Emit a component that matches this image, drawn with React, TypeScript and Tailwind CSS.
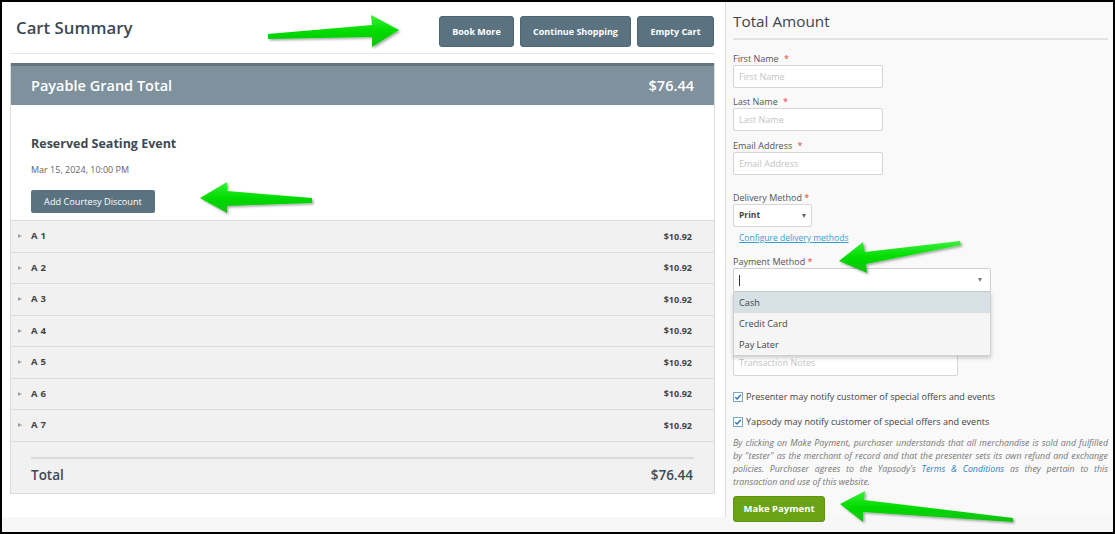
import React from "react";

const font = { fontFamily: "'Open Sans', 'Noto Sans', sans-serif" };

function Arrow({ points }: { points: string }) {
  return <polygon points={points} fill="url(#g)" />;
}

function Row({ label }: { label: string }) {
  return (
    <div className="h-[31.5px] border-t border-[#dcdcdc] bg-[#f1f1f1] flex items-center pl-[7px] pr-[22px]">
      <span className="w-0 h-0 border-y-[2.5px] border-y-transparent border-l-[4px] border-l-[#a0a0a0] mr-[9px]" />
      <span className="text-[9.5px] font-bold text-[#444] tracking-[0.3px]">{label}</span>
      <span className="ml-auto text-[9px] font-bold text-[#444]">$10.92</span>
    </div>
  );
}

function Label({ children }: { children: React.ReactNode }) {
  return (
    <div className="text-[9px] leading-[12px] text-[#555]">
      {children} <span className="text-[#e0403a] ml-[3px]">*</span>
    </div>
  );
}

function Input({ ph, w = "w-[150px]" }: { ph: string; w?: string }) {
  return (
    <div className={`${w} h-[23px] bg-white border border-[#d6d6d6] rounded-[2px] flex items-center pl-[5px] text-[9px] text-[#c4c4c4]`}>
      {ph}
    </div>
  );
}

function Check({ text }: { text: string }) {
  return (
    <div className="flex items-center h-[14px]">
      <span className="w-[10px] h-[10px] border border-[#7aa6cc] bg-white flex items-center justify-center mr-[3px]">
        <svg width="8" height="8" viewBox="0 0 8 8">
          <path d="M1.2 4.2 L3.1 6 L6.8 1.8" stroke="#2a6db5" strokeWidth="1.3" fill="none" />
        </svg>
      </span>
      <span className="text-[9.1px] text-[#444]">{text}</span>
    </div>
  );
}

const buttons: [string, string][] = [
  ["Book More", "w-[75px]"],
  ["Continue Shopping", "w-[111px]"],
  ["Empty Cart", "w-[77px]"],
];

export default function App() {
  return (
    <div style={font} className="relative w-[1115px] h-[534px] border-2 border-black bg-[#f7f7f7] flex overflow-hidden box-border">
      {/* Left column */}
      <div className="w-[723px] h-[515px] bg-white pl-[8px] pr-[10px] shrink-0">
        <div className="h-[52px] border-b border-[#e6e6e6] flex justify-between items-start">
          <div className="mt-[14px] pl-[6px] text-[16.8px] leading-[24px] font-semibold text-[#3d4954]">Cart Summary</div>
          <div className="mt-[14px] flex gap-[6px] pr-[1px]">
            {buttons.map(([b, w]) => (
              <div key={b} className={`${w} h-[31px] bg-[#5b7380] border border-[#4e6571] rounded-[3px] text-white text-[9px] font-bold flex items-center justify-center`}>
                {b}
              </div>
            ))}
          </div>
        </div>
        <div className="mt-[9px] border border-[#dcdcdc] border-t-0">
          <div className="h-[42px] bg-[#7f919c] border-t-[3px] border-[#64777f] flex items-center pl-[20px] pr-[20px] text-white text-[14.5px] font-semibold">
            <span>Payable Grand Total</span>
            <span className="ml-auto">$76.44</span>
          </div>
          <div className="pt-[30px] pb-[7px] pl-[20px]">
            <div className="text-[12.5px] leading-[18px] font-bold text-[#3d4954]">Reserved Seating Event</div>
            <div className="mt-[10px] text-[9px] leading-[14px] text-[#666]">Mar 15, 2024, 10:00 PM</div>
            <div className="mt-[13px] w-[124px] h-[23px] bg-[#5b7380] rounded-[2px] text-white text-[9.2px] flex items-center justify-center">
              Add Courtesy Discount
            </div>
          </div>
          {["A 1", "A 2", "A 3", "A 4", "A 5", "A 6", "A 7"].map((r) => (
            <Row key={r} label={r} />
          ))}
          <div className="border-t border-[#dcdcdc] bg-[#f1f1f1] pt-[15px] pb-[8px] px-[20px]">
            <div className="h-[2px] bg-[#dadada]" />
            <div className="mt-[6px] flex text-[13.5px] leading-[20px] font-semibold text-[#3d4954]">
              <span>Total</span>
              <span className="ml-auto pr-[1px]">$76.44</span>
            </div>
          </div>
        </div>
      </div>

      {/* Right column */}
      <div className="relative flex-1 h-[515px] border-l border-[#dedede] bg-[#f9f9f9] pl-[7px] pr-[5px]">
        <div className="pt-[7px] pb-[5px] border-b-2 border-[#e4e4e4] text-[15.3px] leading-[24px] text-[#444]">Total Amount</div>
        <div className="mt-[13px]">
          <Label>First Name</Label>
          <Input ph="First Name" />
        </div>
        <div className="mt-[8px]">
          <Label>Last Name</Label>
          <Input ph="Last Name" />
        </div>
        <div className="mt-[9px]">
          <Label>Email Address</Label>
          <Input ph="Email Address" />
        </div>
        <div className="mt-[17px]">
          <div className="text-[9px] leading-[12px] text-[#555]">
            Delivery Method <span className="text-[#e0403a]">*</span>
          </div>
          <div className="w-[79px] h-[23px] bg-white border border-[#d6d6d6] rounded-[2px] flex items-center pl-[5px] pr-[5px] text-[8.5px] font-bold text-[#444]">
            Print
            <span className="ml-auto w-0 h-0 border-x-[2.5px] border-x-transparent border-t-[4px] border-t-[#666]" />
          </div>
        </div>
        <div className="mt-[5px] ml-[6px] text-[8.5px] leading-[12px] text-[#3aa0d0] underline">Configure delivery methods</div>
        <div className="mt-[12px]">
          <div className="text-[9px] leading-[12px] text-[#555]">
            Payment Method <span className="text-[#e0403a]">*</span>
          </div>
          <div className="relative">
            <div className="w-[258px] h-[24px] bg-white border border-[#cfcfcf] rounded-t-[2px] flex items-center pl-[5px] pr-[8px] text-[11px] text-[#333]">
              <span className="w-px h-[11px] bg-[#333]" />
              <span className="ml-auto w-0 h-0 border-x-[2.5px] border-x-transparent border-t-[4px] border-t-[#777]" />
            </div>
            <div className="absolute z-10 left-0 top-[24px] w-[258px] bg-[#f5f5f5] border border-[#d0d0d0] border-t-0 shadow-[0_2px_4px_rgba(0,0,0,0.2)] text-[9.2px] text-[#444]">
              <div className="h-[21px] bg-[#d6e0e5] flex items-center pl-[5px]">Cash</div>
              <div className="h-[21px] flex items-center pl-[5px]">Credit Card</div>
              <div className="h-[21px] flex items-center pl-[5px]">Pay Later</div>
            </div>
          </div>
        </div>
        <div className="mt-[59px] w-[225px] h-[25px] bg-white border border-[#d6d6d6] rounded-[2px] pl-[5px] pt-[5px] text-[9px] leading-[12px] text-[#c4c4c4]">
          Transaction Notes
        </div>
        <div className="mt-[14px]">
          <Check text="Presenter may notify customer of special offers and events" />
        </div>
        <div className="mt-[11px]">
          <Check text="Yapsody may notify customer of special offers and events" />
        </div>
        <div className="mt-[8px] text-[8.8px] leading-[13px] italic text-[#777]">
          <div className="text-justify [text-align-last:justify] whitespace-nowrap">By clicking on Make Payment, purchaser understands that all merchandise is sold and fulfilled</div>
          <div className="text-justify [text-align-last:justify] whitespace-nowrap">by "tester" as the merchant of record and that the presenter sets its own refund and exchange</div>
          <div className="text-justify [text-align-last:justify] whitespace-nowrap">
            policies. Purchaser agrees to the Yapsody's <span className="text-[#2a7fc4]">Terms &amp; Conditions</span> as they pertain to this
          </div>
          <div>transaction and use of this website.</div>
        </div>
        <div className="mt-[7px] w-[92px] h-[26px] bg-[#6aa315] border border-[#5e9410] rounded-[3px] text-white text-[9.5px] font-bold flex items-center justify-center">
          Make Payment
        </div>
      </div>

      {/* Annotation arrows */}
      <svg className="absolute left-[-2px] top-[-2px] pointer-events-none z-20" width="1115" height="534">
        <defs>
          <linearGradient id="g" x1="0" y1="0" x2="0" y2="1">
            <stop offset="0" stopColor="#3cf03c" />
            <stop offset="0.5" stopColor="#00dc00" />
            <stop offset="1" stopColor="#10c010" />
          </linearGradient>
          <filter id="s" x="-10%" y="-30%" width="120%" height="160%">
            <feDropShadow dx="1.5" dy="1.5" stdDeviation="1.2" floodColor="#000" floodOpacity="0.35" />
          </filter>
        </defs>
        <g filter="url(#s)">
          <Arrow points="268,34 372,25 371,15 399,30 372,47 372,37 268,39" />
          <Arrow points="312,198 227,191 227,182 200,198 227,213 227,206 312,203" />
          <Arrow points="960,241 865,252 863,242 839,261 867,273 866,264 961,245" />
          <Arrow points="1013,518 864,500 865,491 840,504 863,522 863,512 1013,522" />
        </g>
      </svg>
    </div>
  );
}
